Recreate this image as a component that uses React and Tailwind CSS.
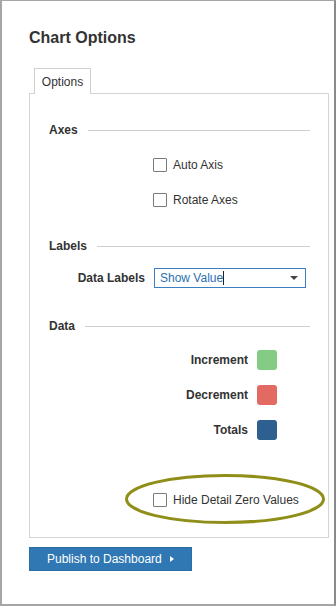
import React from 'react';

const font = { fontFamily: '"Liberation Sans", Arial, Helvetica, sans-serif' };

// Section heading with a rule running to the right edge
const SectionHeading = ({ title, className = '' }) => (
  <div className={`flex items-center h-4 pr-[18px] ${className}`}>
    <span className="text-[12px] font-bold text-[#333]">{title}</span>
    <div className="flex-1 h-px bg-[#cfcfcf] ml-[10px]" />
  </div>
);

const Checkbox = ({ label, className = '' }) => (
  <div className={`flex items-center h-[14px] pl-[104px] ${className}`}>
    <span className="w-[14px] h-[14px] border border-[#7a7a7a] rounded-[1px] bg-white" />
    <span className="ml-[6px] text-[12px] text-[#333]">{label}</span>
  </div>
);

const ColorRow = ({ label, color, className = '' }) => (
  <div className={`flex items-center h-5 ${className}`}>
    <span className="w-[199px] text-right text-[12px] font-bold text-[#333]">{label}</span>
    <span className={`ml-[9px] w-5 h-5 rounded-[3px] ${color}`} />
  </div>
);

const App = () => {
  return (
    <div
      className="relative w-[336px] h-[606px] bg-white border-t border-b-2 border-l-2 border-r-2 border-[#a6a6a6] border-r-[#8a8a8a] pl-[27px] pt-[27px]"
      style={font}
    >
      {/* Title */}
      <h1 className="text-[16px] leading-5 font-bold text-[#333]">Chart Options</h1>

      {/* Tab strip */}
      <div className="mt-[20px] flex pl-[5px]">
        <div className="relative z-10 -mb-px h-[26px] w-[57px] border border-b-0 border-[#cfcfcf] bg-white flex items-center justify-center text-[12px] text-[#333]">
          Options
        </div>
      </div>

      {/* Panel */}
      <div className="w-[300px] h-[445px] border border-[#d4d4d4] pl-[19px] pt-[28px]">
        <SectionHeading title="Axes" />
        <Checkbox label="Auto Axis" className="mt-[20px]" />
        <Checkbox label="Rotate Axes" className="mt-[21px]" />

        <SectionHeading title="Labels" className="mt-[31px]" />
        <div className="mt-[14px] flex items-center h-5">
          <span className="w-[96px] text-right text-[12px] font-bold text-[#333]">Data Labels</span>
          <div className="ml-[9px] w-[152px] h-5 border border-[#3b7fc0] flex items-center pl-[5px] pr-[7px]">
            <span className="text-[12px] text-[#2c6fb0]">Show Value</span>
            <span className="w-px h-[14px] bg-[#222]" />
            <span className="ml-auto w-0 h-0 border-l-[4px] border-r-[4px] border-t-[4px] border-l-transparent border-r-transparent border-t-[#444]" />
          </div>
        </div>

        <SectionHeading title="Data" className="mt-[30px]" />
        <ColorRow label="Increment" color="bg-[#84cb84]" className="mt-[16px]" />
        <ColorRow label="Decrement" color="bg-[#e26a63]" className="mt-[15px]" />
        <ColorRow label="Totals" color="bg-[#2d5f91]" className="mt-[15px]" />

        <Checkbox label="Hide Detail Zero Values" className="mt-[53px]" />
      </div>

      {/* Publish button */}
      <button className="mt-[9px] w-[163px] h-6 bg-[#2f78b4] border border-[#2a6ea6] flex items-center pl-[17px] text-[12px] text-white">
        Publish to Dashboard
        <span className="ml-[8px] w-0 h-0 border-t-[3.5px] border-b-[3.5px] border-l-[4px] border-t-transparent border-b-transparent border-l-white" />
      </button>

      {/* Highlight ellipse around the option */}
      <svg className="absolute left-[122px] top-[472px] pointer-events-none" width="202" height="52" viewBox="0 0 202 52">
        <ellipse cx="101" cy="26" rx="98.5" ry="23.5" fill="none" stroke="#8f8e18" strokeWidth="3" />
      </svg>
    </div>
  );
};

export default App;
